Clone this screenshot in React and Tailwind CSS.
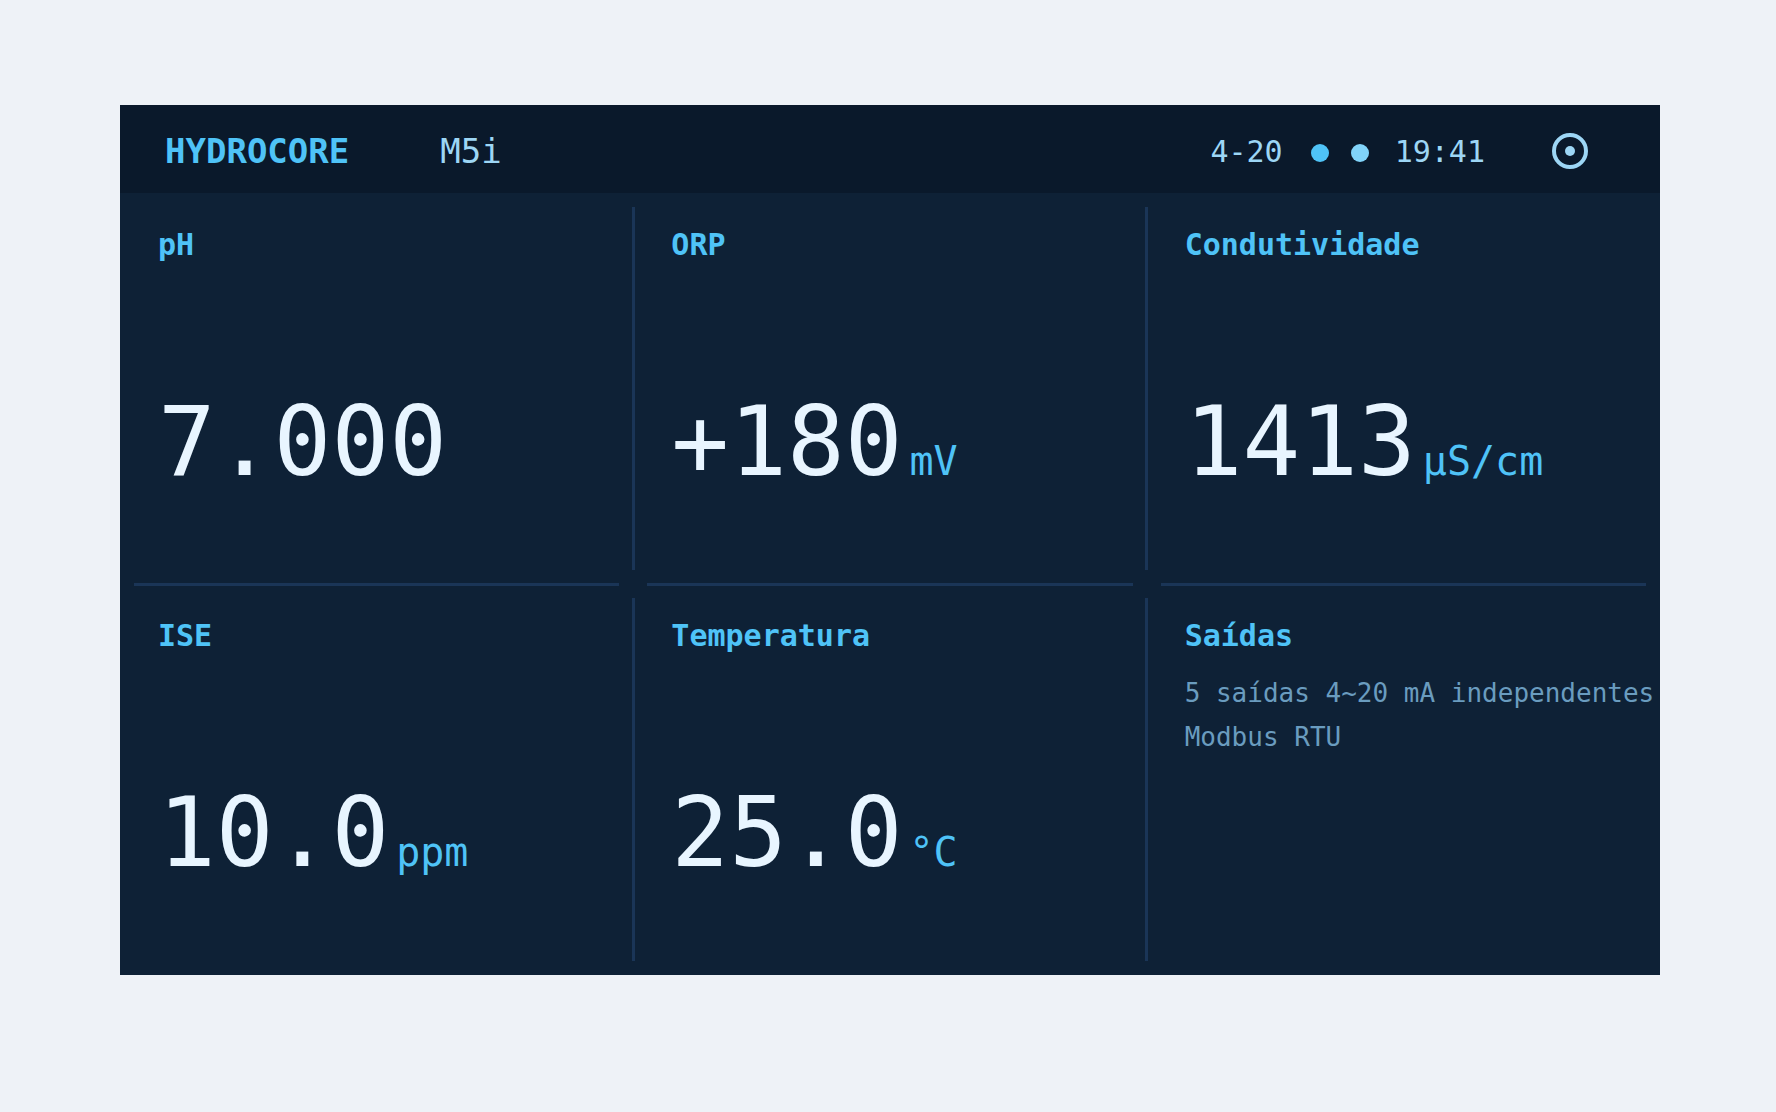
const mono = "font-['DejaVu_Sans_Mono',monospace]";

function Cell({ label, value, unit, right, bottom, children }) {
  return (
    <div className="relative flex flex-col pl-[38px] pt-[34px] min-w-0">
      <div className="text-[30px] leading-[36px] font-bold text-[#4fc3f7]">{label}</div>
      {children}
      {value && (
        <div className="mt-[123px] flex items-baseline gap-[7px]">
          <span className="text-[96px] leading-[112px] text-[#e8f5ff]">{value}</span>
          {unit && <span className="text-[40px] leading-[48px] text-[#4fc3f7]">{unit}</span>}
        </div>
      )}
      {/* dividers sit inset from the cell edges */}
      {right && <div className="absolute -right-[1.5px] top-[14px] bottom-[14px] w-[3px] bg-[#1a3557]" />}
      {bottom && <div className="absolute left-[14px] right-[14px] -bottom-[1.5px] h-[3px] bg-[#1a3557]" />}
    </div>
  );
}

export default function App() {
  return (
    <div className={`min-h-screen bg-[#eef2f7] pl-[120px] pt-[105px] ${mono}`}>
      <div className="w-[1540px] h-[870px] flex flex-col bg-[#0e2136] overflow-hidden">
        <header className="h-[88px] flex items-center pt-[4px] pl-[45px] pr-[72px] bg-[#0a192b]">
          <span className="text-[34px] font-bold text-[#4fc3f7]">HYDROCORE</span>
          <span className="ml-[91px] text-[34px] text-[#9dd6f5]">M5i</span>
          <div className="ml-auto flex items-center text-[30px] text-[#9dd6f5]">
            <span>4-20</span>
            <span className="ml-[28px] mt-[4px] w-[18px] h-[18px] rounded-full bg-[#4fc3f7]" />
            <span className="ml-[22px] mt-[4px] w-[18px] h-[18px] rounded-full bg-[#81d4fa]" />
            <span className="ml-[26px]">19:41</span>
            <svg className="ml-[67px]" width="36" height="36" viewBox="0 0 36 36" fill="none">
              <circle cx="18" cy="18" r="16" stroke="#9dd6f5" strokeWidth="4" />
              <circle cx="18" cy="18" r="5" fill="#9dd6f5" />
            </svg>
          </div>
        </header>
        <div className="flex-1 grid grid-cols-3 grid-rows-2">
          <Cell label="pH" value="7.000" right bottom />
          <Cell label="ORP" value="+180" unit="mV" right bottom />
          <Cell label="Condutividade" value="1413" unit="µS/cm" bottom />
          <Cell label="ISE" value="10.0" unit="ppm" right />
          <Cell label="Temperatura" value="25.0" unit="°C" right />
          <Cell label="Saídas">
            <div className="mt-[17px] text-[26px] leading-[44px] whitespace-nowrap text-[#6a9cbf]">
              <div>5 saídas 4~20 mA independentes</div>
              <div>Modbus RTU</div>
            </div>
          </Cell>
        </div>
      </div>
    </div>
  );
}
